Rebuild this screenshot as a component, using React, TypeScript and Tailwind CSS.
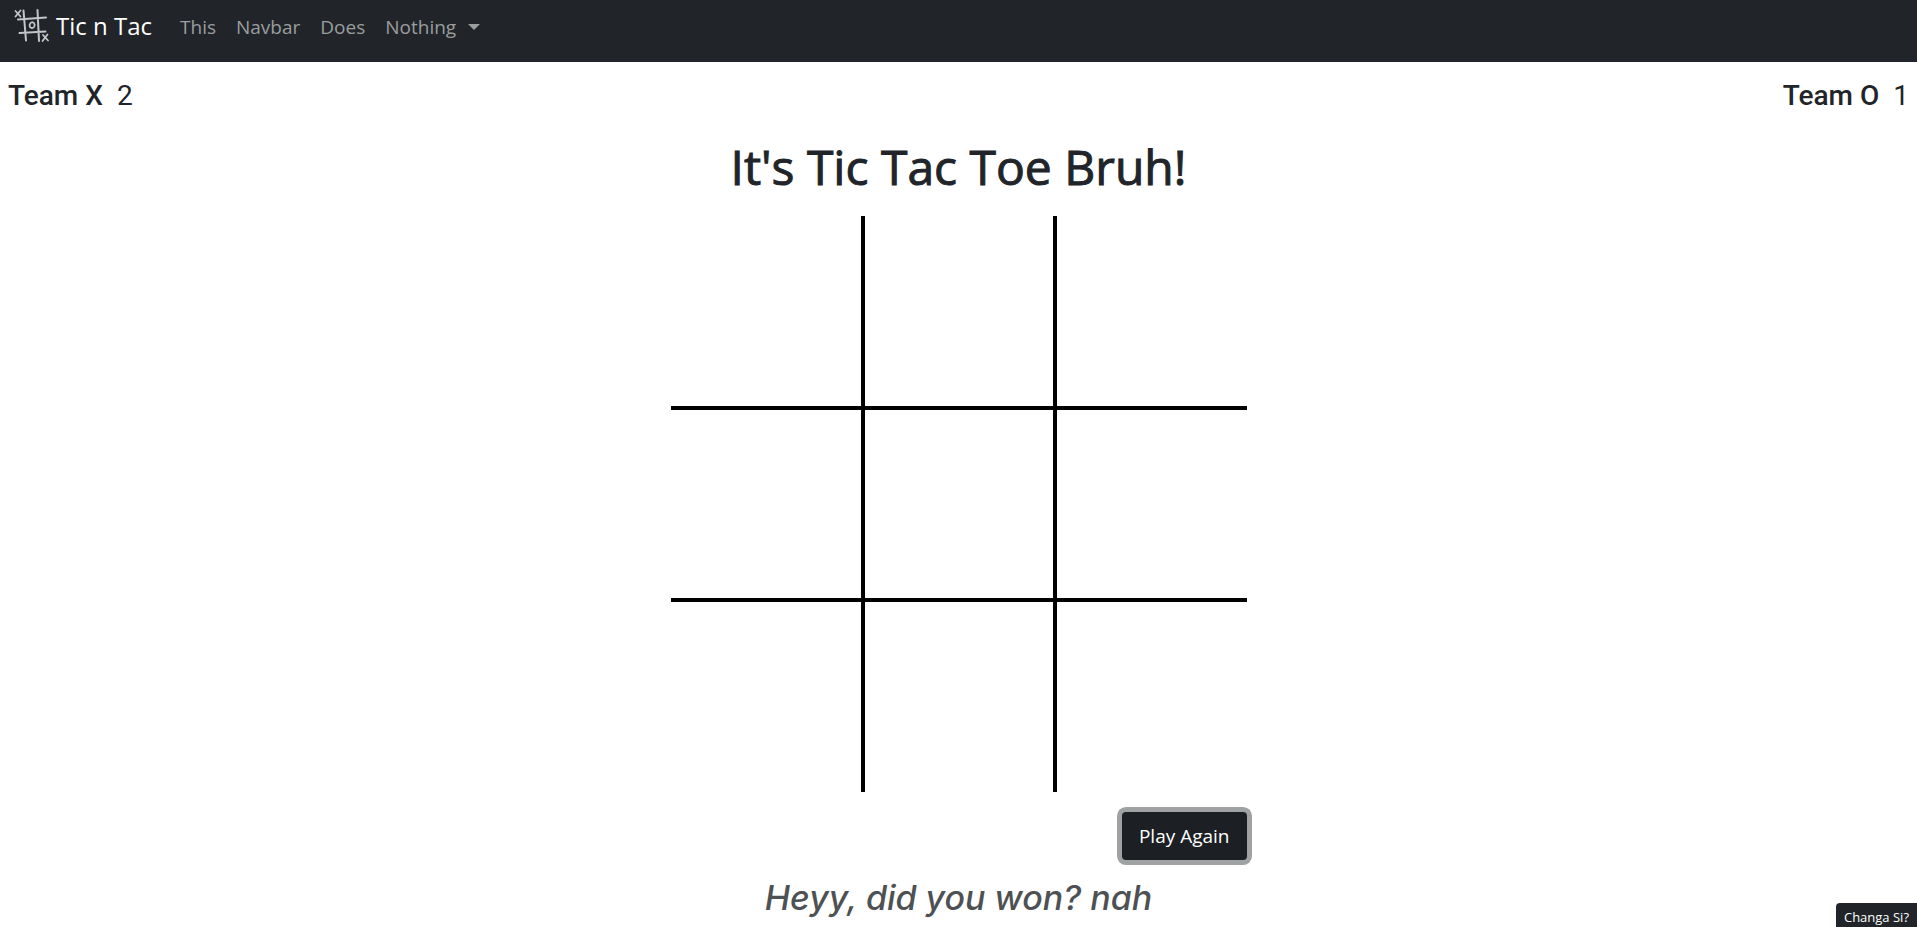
import { useState } from "react";

const links = ["This", "Navbar", "Does"];

const cellBorders = [
  "border-r-2 border-b-2",
  "border-x-2 border-b-2",
  "border-l-2 border-b-2",
  "border-r-2 border-y-2",
  "border-2",
  "border-l-2 border-y-2",
  "border-r-2 border-t-2",
  "border-x-2 border-t-2",
  "border-l-2 border-t-2",
];

function Logo() {
  return (
    <svg width="36" height="36" viewBox="0 0 36 36" fill="none" stroke="#c3c5c7" strokeWidth="2" strokeLinecap="round" aria-hidden="true">
      <path d="M9.500 2.500 12 32.500M23.500 2 25 33M4 11.500 32 9.500M5.500 25 31.500 23.500" />
      <path strokeWidth="1.800" d="M1.500 3 6.500 8.500M6.500 2.500 1.500 8.500M29 27 34 32.500M33.500 26.500 28.500 33" />
      <path strokeWidth="1.800" d="M18.300 14.200C16.300 14.600 15.300 16.300 15.700 18.200 16.100 20 18.300 20.500 19.700 19.400 21.300 18.100 21 14.600 18.300 14.200Z" />
    </svg>
  );
}

export default function App() {
  const [cells, setCells] = useState<string[]>(Array(9).fill(""));

  const play = (index: number) =>
    setCells((prev) => {
      if (prev[index]) return prev;
      const mark = prev.filter(Boolean).length % 2 === 0 ? "X" : "O";
      return prev.map((cell, i) => (i === index ? mark : cell));
    });

  return (
    <div className="flex min-h-screen flex-col bg-white font-['Open_Sans','Noto_Sans',sans-serif] text-[#212529]">
      <nav className="flex h-[62px] shrink-0 items-start bg-[#212529] px-3.5 pt-2">
        <a href="#home" className="flex h-9 items-center gap-1.5 text-2xl text-white">
          <Logo />
          <span>Tic n Tac</span>
        </a>
        <div className="ml-7 flex h-9 items-center gap-5 pt-0.5 text-[19px] text-[#9b9d9f]">
          {links.map((label) => (
            <a key={label} href="#nav">{label}</a>
          ))}
          <button type="button" className="flex items-center gap-3">
            Nothing
            <svg width="12" height="6" viewBox="0 0 12 6" fill="currentColor" aria-hidden="true">
              <path d="M0 0H12L6 6Z" />
            </svg>
          </button>
        </div>
      </nav>

      <section className="flex justify-between px-2 pt-3 font-[Roboto,sans-serif] text-[28px] leading-[44px]">
        <p className="flex gap-3.5">
          <span className="font-medium">Team X</span>
          <span>2</span>
        </p>
        <p className="flex gap-3.5">
          <span className="font-medium">Team O</span>
          <span>1</span>
        </p>
      </section>

      <main className="flex flex-col items-center">
        <h1 className="mt-4 text-5xl leading-[66px] [-webkit-text-stroke:1px]">It's Tic Tac Toe Bruh!</h1>
        <div className="mt-4 flex flex-col items-end">
          <div className="grid grid-cols-3">
            {cells.map((mark, i) => (
              <button
                key={i}
                type="button"
                aria-label={`Cell ${i + 1}`}
                onClick={() => play(i)}
                className={`size-48 border-black text-8xl ${cellBorders[i]}`}
              >
                {mark}
              </button>
            ))}
          </div>
          <button
            type="button"
            onClick={() => setCells(Array(9).fill(""))}
            className="mt-5 h-12 rounded-sm bg-[#1c1f23] px-[17px] text-[19px] text-white ring-5 ring-[#a0a1a3]"
          >
            Play Again
          </button>
        </div>
        <p className="mt-3.5 font-[Inter,sans-serif] text-[34px] leading-[48px] font-medium text-[#4d5154] italic">
          Heyy, did you won? nah
        </p>
      </main>

      <button type="button" className="fixed right-0 bottom-0 h-6 rounded-tl-sm bg-[#212529] pt-1 pr-2 pl-2 text-[13px] leading-5 text-white">
        Changa Si?
      </button>
    </div>
  );
}
